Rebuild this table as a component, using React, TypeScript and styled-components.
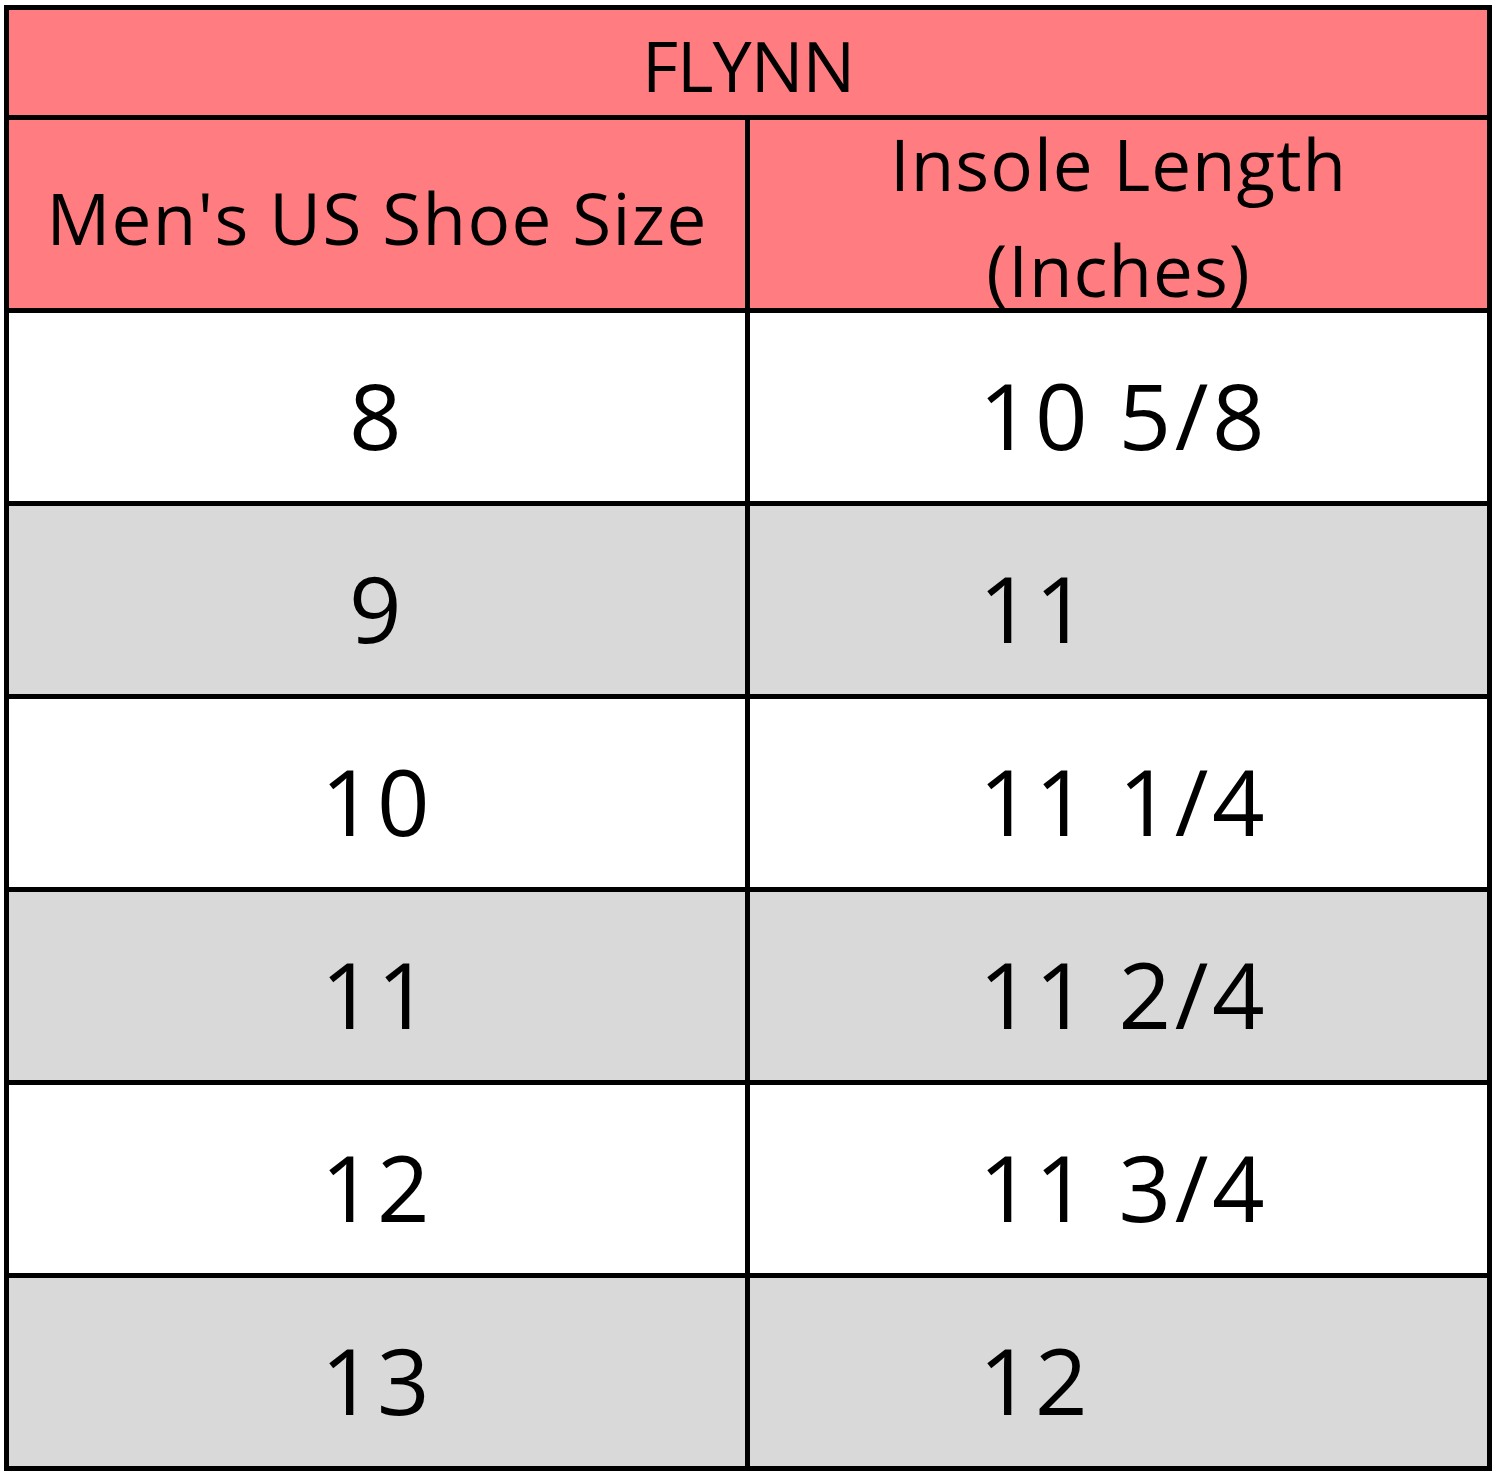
import React from "react";
import styled, { createGlobalStyle, css } from "styled-components";

const GlobalStyle = createGlobalStyle`
  html, body {
    margin: 0;
    padding: 0;
    background: #ffffff;
  }
  body {
    font-family: "Open Sans", "DejaVu Sans", sans-serif;
    color: #000;
  }
`;

const Page = styled.div`
  padding: 5px 0 0 4px;
`;

const Table = styled.div`
  display: grid;
  grid-template-columns: 736px 737px;
  grid-template-rows: 105px 188px repeat(6, 188px);
  gap: 5px;
  width: fit-content;
  background: #000;
  border: 5px solid #000;
`;

const Cell = styled.div<{ $bg: string }>`
  background: ${(p) => p.$bg};
  display: flex;
  align-items: center;
  box-sizing: border-box;
  min-width: 0;
`;

const TitleCell = styled(Cell)`
  grid-column: 1 / -1;
  justify-content: center;
  padding-top: 5px;
  font-size: 70px;
  letter-spacing: -1px;
  line-height: normal;
`;

const HeaderCell = styled(Cell)`
  justify-content: center;
  padding-top: 7px;
  font-size: 71px;
  line-height: 106px;
  letter-spacing: 1.3px;
  text-align: center;
  white-space: nowrap;
`;

const StackedHeaderCell = styled(Cell)`
  justify-content: center;
  align-items: flex-start;
  padding-top: 6px;
  font-size: 71px;
  letter-spacing: 1px;
`;

const HeaderLines = styled.div`
  display: flex;
  flex-direction: column;
  align-items: center;
  gap: 30px;
  white-space: nowrap;
  line-height: 76px;
`;

const DataCell = styled(Cell)<{ $align: "center" | "left" }>`
  padding-top: 14px;
  font-size: 92px;
  letter-spacing: 3.5px;
  line-height: normal;
  white-space: nowrap;
  ${(p) =>
    p.$align === "center"
      ? css`
          justify-content: center;
        `
      : css`
          justify-content: flex-start;
          padding-left: 229px;
        `}
`;

const PINK = "#FF7C80";
const GREY = "#D9D9D9";
const WHITE = "#FFFFFF";

const rows: [string, string][] = [
  ["8", "10 5/8"],
  ["9", "11"],
  ["10", "11 1/4"],
  ["11", "11 2/4"],
  ["12", "11 3/4"],
  ["13", "12"],
];

export default function App() {
  return (
    <>
      <GlobalStyle />
      <Page>
        <Table>
          <TitleCell $bg={PINK}>FLYNN</TitleCell>
          <HeaderCell $bg={PINK}>Men's US Shoe Size</HeaderCell>
          <StackedHeaderCell $bg={PINK}>
            <HeaderLines>
              <span>Insole Length</span>
              <span>(Inches)</span>
            </HeaderLines>
          </StackedHeaderCell>
          {rows.map(([size, len], i) => {
            const bg = i % 2 === 1 ? GREY : WHITE;
            return (
              <React.Fragment key={size}>
                <DataCell $bg={bg} $align="center">
                  {size}
                </DataCell>
                <DataCell $bg={bg} $align="left">
                  {len}
                </DataCell>
              </React.Fragment>
            );
          })}
        </Table>
      </Page>
    </>
  );
}
